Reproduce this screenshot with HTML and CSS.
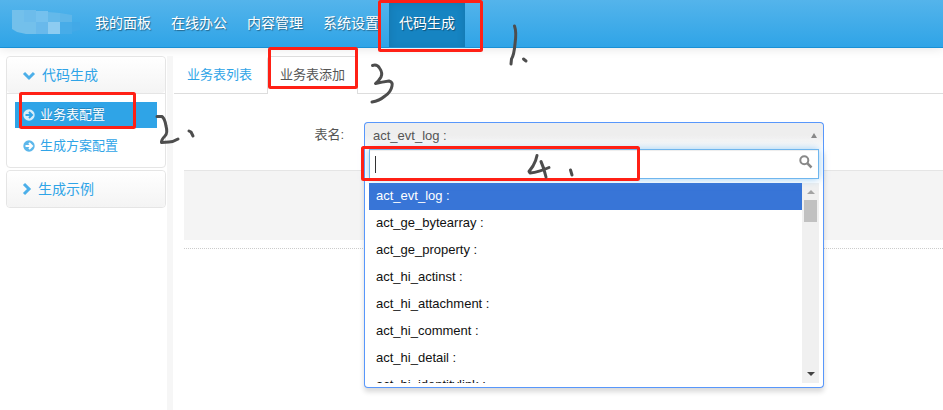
FILE: index.html
```html
<!DOCTYPE html>
<html lang="zh-CN">
<head>
<meta charset="utf-8">
<title>代码生成</title>
<link rel="stylesheet" href="styles.css">
</head>
<body>
<header class="navbar">
  <svg class="brand" viewBox="0 0 85 47" aria-hidden="true">
    <path d="M12 10h24v24H26l-9-2-5-3z" fill="#73c0eb"/>
    <path d="M24 10h12v12H24z" fill="#6dbceb"/>
    <path d="M36 11h12v11H36z" fill="#75c1ee"/>
    <path d="M36 22h12v12H36z" fill="#69b9eb"/>
    <path d="M48 12l12 1v9H48z" fill="#64b9ea"/>
    <path d="M48 22h12v12H48z" fill="#8dccf1"/>
    <path d="M60 13l12 2v7H60z" fill="#5eb6e9"/>
    <path d="M60 22h12v12H60z" fill="#47ace8"/>
    <path d="M72 22h8v8l-8 2z" fill="#42a9e7"/>
  </svg>
  <nav class="menu">
    <a href="#">我的面板</a>
    <a href="#">在线办公</a>
    <a href="#">内容管理</a>
    <a href="#">系统设置</a>
    <a href="#" class="active">代码生成</a>
  </nav>
</header>

<div class="main">
  <aside class="sidebar">
    <section class="group">
      <a href="#" class="group-title">
        <svg class="chevron" viewBox="0 0 14 14"><path d="M2 5l5 5 5-5"/></svg>代码生成</a>
      <ul class="links">
        <li><a href="#" class="active"><svg class="dot" viewBox="0 0 12 12"><circle cx="6" cy="6" r="5.7"/><path d="M2.5 6h6M6 3l3 3-3 3"/></svg>业务表配置</a></li>
        <li><a href="#"><svg class="dot" viewBox="0 0 12 12"><circle cx="6" cy="6" r="5.7"/><path d="M2.500 6h6M6 3l3 3-3 3"/></svg>生成方案配置</a></li>
      </ul>
    </section>
    <section class="group">
      <a href="#" class="group-title closed">
        <svg class="chevron" viewBox="0 0 10 14"><path d="M2 2l5 5-5 5"/></svg>生成示例</a>
    </section>
  </aside>
  <div class="splitter"></div>
  <main class="content">
    <nav class="tabs">
      <a href="#">业务表列表</a>
      <a href="#" class="active">业务表添加</a>
    </nav>
    <form class="form">
      <div class="row">
        <label for="table-name">表名:</label>
        <div class="select">
          <button type="button" id="table-name" class="choice">act_evt_log :<span class="arrow-up"></span></button>
          <div class="drop">
            <div class="search">
              <input type="text" aria-label="搜索表名">
              <span class="caret"></span>
              <svg viewBox="0 0 14 14" aria-hidden="true"><circle cx="5.3" cy="5.3" r="4"/><path d="M8.200 8.200l4.300 4.300" stroke-width="2.500"/></svg>
            </div>
            <div class="results">
              <ul>
                <li class="active">act_evt_log :</li>
                <li>act_ge_bytearray :</li>
                <li>act_ge_property :</li>
                <li>act_hi_actinst :</li>
                <li>act_hi_attachment :</li>
                <li>act_hi_comment :</li>
                <li>act_hi_detail :</li>
                <li>act_hi_identitylink :</li>
              </ul>
              <div class="scrollbar"><span class="arrow-up"></span><span class="thumb"></span><span class="arrow-down"></span></div>
            </div>
          </div>
        </div>
      </div>
      <div class="actions"></div>
      <div class="rule"></div>
    </form>
  </main>
</div>

<svg class="notes" viewBox="0 0 943 410" aria-hidden="true">
  <g class="frames">
    <rect x="379.500" y="1.500" width="102" height="49" rx="1"/>
    <rect x="20.500" y="93.500" width="114" height="34" rx="1"/>
    <rect x="269.500" y="48.500" width="87" height="39" rx="1"/>
    <rect x="362.500" y="147.500" width="276" height="32" rx="1"/>
  </g>
  <g class="ink">
    <path d="M514.500 26C516 30 516 37 515 44Q514 55 511.500 59L511 64M523.500 59l2.500 2"/>
    <path d="M157 116.500h5Q165 119 166 126Q168 133 165 136Q161 140 161.500 142.500L169 142Q173 142 178 139M189 131l2 1 2 4"/>
    <path d="M372.500 65.500Q377 64 379.500 68Q383 73 381 77Q378 82 375.500 83.500Q382 82 389 81Q393 82 392 86Q391 92 385 96Q379 101 372 102"/>
    <path d="M537 155.500Q536 161 533 166L529 171.500L530 173Q539 172 549 167.500M541 161.500Q544 168 546 177M570.500 170l1.500 5"/>
  </g>
</svg>
</body>
</html>
```
FILE: styles.css
```css
* { box-sizing: border-box; }

body {
  margin: 0;
  min-height: 100vh;
  display: flex;
  flex-direction: column;
  overflow: hidden;
  position: relative;
  background: #fff;
  color: #555;
  font: 13px/20px "Liberation Sans", "Noto Sans CJK SC", sans-serif;
}

a { color: #2fa4e7; text-decoration: none; }
ul { list-style: none; margin: 0; padding: 0; }

.navbar {
  display: flex;
  height: 48px;
  border-bottom: 1px solid #1990d5;
  background: linear-gradient(#54b4eb, #2fa4e7);
  box-shadow: 0 1px 10px rgba(0, 0, 0, .1);
}
.brand { width: 85px; height: 47px; }
.menu { display: flex; }
.menu a {
  padding: 13px 10px 14px;
  color: #fff;
  font-size: 14px;
  text-shadow: 1px 1px 1px rgba(0, 0, 0, .4);
}
.menu .active {
  background: #1684c2;
  box-shadow: inset 0 3px 8px rgba(0, 0, 0, .125);
}

.main { flex: 1; display: flex; padding: 8px 0 0 6px; }

.sidebar { width: 160px; display: flex; flex-direction: column; gap: 2px; }
.group { border: 1px solid #e5e5e5; border-radius: 4px; }
.group-title {
  display: flex;
  align-items: center;
  gap: 6px;
  height: 36px;
  padding: 0 15px;
  border-radius: 4px;
  background: linear-gradient(#fff, #f4f4f4);
  font-size: 14px;
}
.chevron { width: 14px; height: 14px; fill: none; stroke: #4cafe9; stroke-width: 3; }
.closed .chevron { width: 10px; }
.links {
  display: flex;
  flex-direction: column;
  gap: 5px;
  padding: 8px;
  border-top: 1px solid #e5e5e5;
}
.links a { display: flex; align-items: center; gap: 5px; height: 26px; padding: 0 8px 1px; }
.links .active { background: #2fa4e7; color: #fff; text-shadow: 0 -1px 0 rgba(0, 0, 0, .2); }
.dot { width: 12px; height: 12px; fill: #5cb7eb; }
.dot path { fill: none; stroke: #fff; stroke-width: 2; }
.active .dot { fill: #d5edfa; }
.active .dot path { stroke: #2fa4e7; }

.splitter { width: 6px; margin: 0 1px; background: #f6f6f6; }

.content { flex: 1; min-width: 0; }
.tabs { display: flex; gap: 2px; height: 38px; border-bottom: 1px solid #ddd; }
.tabs a { height: 38px; padding: 8px 12px; border: 1px solid transparent; border-bottom: 0; }
.tabs .active { background: #fff; border-color: #ddd; border-radius: 4px 4px 0 0; color: #555; }

.form { padding: 28px 0 0 10px; }
.row { display: flex; height: 48px; }
.row label { width: 160px; padding-top: 3px; text-align: right; }
.select { position: relative; width: 460px; height: 28px; margin-left: 20px; }
.choice {
  display: flex;
  align-items: center;
  justify-content: space-between;
  width: 100%;
  height: 28px;
  padding: 0 6px 2px 8px;
  border: 1px solid #5897fb;
  border-bottom: 0;
  border-radius: 4px 4px 0 0;
  background: linear-gradient(#eee 45%, #fff);
  color: #555;
  font: 13px/20px "Liberation Sans", sans-serif;
}
.arrow-up, .arrow-down { width: 0; height: 0; border: 4px solid transparent; }
.arrow-up { border-top: 0; border-bottom: 5px solid #888; }
.arrow-down { border-bottom: 0; border-top: 4px solid #444; }
.choice .arrow-up { border-width: 0 3px 5px; }

.drop {
  position: absolute;
  z-index: 1;
  top: 27px;
  left: 0;
  width: 100%;
  padding: 0 4px 4px;
  border: 1px solid #5897fb;
  border-top: 0;
  border-radius: 0 0 4px 4px;
  background: #fff;
  box-shadow: 0 4px 5px rgba(0, 0, 0, .15);
}
.search { position: relative; margin-bottom: 4px; }
.search input {
  display: block;
  width: 100%;
  height: 30px;
  padding: 4px 28px 4px 6px;
  border: 1px solid #6fb6ee;
  outline: 0;
  background: #fff;
  box-shadow: inset 0 1px 1px rgba(0, 0, 0, .075), 0 0 8px rgba(82, 168, 236, .6);
  font: 13px/20px "Liberation Sans", sans-serif;
}
.caret { position: absolute; left: 6px; top: 7px; width: 1px; height: 17px; background: #333; }
.search svg {
  position: absolute;
  right: 6px;
  top: 6px;
  width: 14px;
  height: 14px;
  fill: none;
  stroke: #888;
  stroke-width: 2;
}

.results { display: flex; height: 200px; overflow: hidden; color: #111; }
.results ul { flex: 1; }
.results li { height: 27px; padding: 3px 7px 4px; }
.results .active { background: #3875d7; color: #fff; }
.scrollbar {
  display: flex;
  flex-direction: column;
  align-items: center;
  width: 17px;
  padding: 7px 0;
  background: #f0f0f0;
}
.scrollbar .arrow-up { border-bottom: 4px solid #a3a3a3; }
.thumb { width: 13px; height: 22px; margin: 6px 0 auto; background: #c1c1c1; }

.actions { height: 70px; border-top: 1px solid #e5e5e5; background: #f4f4f4; }
.rule { margin-top: 8px; border-top: 1px dotted #ccc; }

.notes { position: absolute; z-index: 2; top: 0; left: 0; width: 943px; height: 410px; pointer-events: none; }
.frames { fill: none; stroke: #ff2015; stroke-width: 3; }
.ink { fill: none; stroke: #4d4d4d; stroke-width: 3; stroke-linecap: round; stroke-linejoin: round; }
```
